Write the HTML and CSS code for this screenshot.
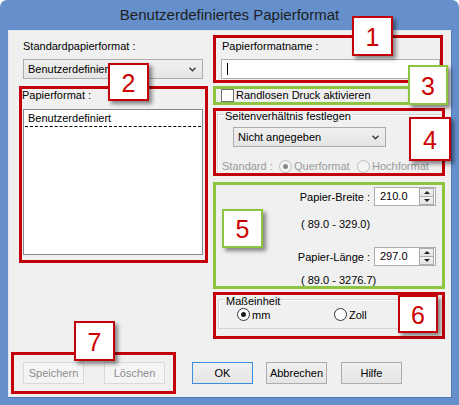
FILE: index.html
```html
<!DOCTYPE html>
<html lang="de">
<head>
<meta charset="utf-8">
<title>Benutzerdefiniertes Papierformat</title>
<link rel="stylesheet" href="styles.css">
</head>
<body>
<div class="window">
  <div class="titlebar">Benutzerdefiniertes Papierformat</div>
  <div class="client">
    <div class="top">
      <div class="col-left">
        <div class="lbl">Standardpapierformat :</div>
        <div class="combo combo-std">
          <span class="combo-text">Benutzerdefiniert</span>
          <svg class="chev" width="7" height="5" viewBox="0 0 7 5"><polyline points="0.5,0.8 3.5,3.8 6.5,0.8" fill="none" stroke="#3a3a3a" stroke-width="1.4"/></svg>
        </div>
        <div class="lbl lbl-pf">Papierformat :</div>
        <div class="listbox">
          <div class="list-item">Benutzerdefiniert</div>
        </div>
      </div>
      <div class="col-right">
        <div class="lbl lbl-name">Papierformatname :</div>
        <div class="textbox"><span class="caret"></span></div>
        <div class="check-row"><span class="checkbox"></span><span class="check-text">Randlosen Druck aktivieren</span></div>
        <div class="group group-ratio">
          <div class="group-title">Seitenverhältnis festlegen</div>
          <div class="combo combo-ratio">
            <span class="combo-text">Nicht angegeben</span>
            <svg class="chev" width="7" height="5" viewBox="0 0 7 5"><polyline points="0.5,0.8 3.5,3.8 6.5,0.8" fill="none" stroke="#3a3a3a" stroke-width="1.4"/></svg>
          </div>
          <div class="ratio-row">
            <span class="std-lbl">Standard :</span>
            <span class="opt opt-quer"><span class="radio radio-dis checked"></span><span>Querformat</span></span>
            <span class="opt"><span class="radio radio-dis"></span><span>Hochformat</span></span>
          </div>
        </div>
        <div class="sizes">
          <div class="size-row">
            <span class="size-lbl">Papier-Breite :</span>
            <div class="spin"><span class="spin-val">210.0</span><span class="spin-btns"><span class="spin-btn spin-up"></span><span class="spin-btn spin-down"></span></span></div>
          </div>
          <div class="range range-1">( 89.0 - 329.0)</div>
          <div class="size-row size-row-2">
            <span class="size-lbl">Papier-Länge :</span>
            <div class="spin"><span class="spin-val">297.0</span><span class="spin-btns"><span class="spin-btn spin-up"></span><span class="spin-btn spin-down"></span></span></div>
          </div>
          <div class="range range-2">( 89.0 - 3276.7)</div>
        </div>
        <div class="group group-unit">
          <div class="group-title">Maßeinheit</div>
          <div class="unit-row">
            <span class="opt opt-mm"><span class="radio checked"></span><span>mm</span></span>
            <span class="opt"><span class="radio"></span><span>Zoll</span></span>
          </div>
        </div>
      </div>
    </div>
    <div class="buttons">
      <button class="btn" disabled>Speichern</button>
      <button class="btn btn-del" disabled>Löschen</button>
      <button class="btn btn-ok">OK</button>
      <button class="btn btn-cancel">Abbrechen</button>
      <button class="btn btn-help">Hilfe</button>
    </div>
  </div>
  <div class="annot">
    <div class="frame red f1"></div>
    <div class="frame red f2"></div>
    <div class="frame green f3"></div>
    <div class="frame red f4"></div>
    <div class="frame green f5"></div>
    <div class="frame red f6"></div>
    <div class="frame red f7"></div>
    <div class="badge red b1">1</div>
    <div class="badge red b2">2</div>
    <div class="badge green b3">3</div>
    <div class="badge red b4">4</div>
    <div class="badge green b5">5</div>
    <div class="badge red b6">6</div>
    <div class="badge red b7">7</div>
  </div>
</div>
</body>
</html>
```
FILE: styles.css
```css
html, body {
  margin: 0;
  padding: 0;
  background: #ffffff;
}
body {
  font-family: "Liberation Sans", Arial, sans-serif;
  font-size: 11px;
  color: #000;
}
.window {
  position: relative;
  width: 459px;
  height: 405px;
  box-sizing: border-box;
  background: #6590cc;
  border-radius: 7px 7px 0 0;
  padding: 0 8px 8px;
  display: flex;
  flex-direction: column;
}
.titlebar {
  height: 30px;
  line-height: 30px;
  text-align: center;
  font-size: 15px;
  color: #1e1e1e;
}
.client {
  flex: 1;
  background: #f0f0f0;
  display: flex;
  flex-direction: column;
  padding: 9px 0 13px;
  box-shadow: inset 1px 1px 0 #dfe6f1, 1px 1px 0 #4f78b6;
}
.top {
  display: flex;
}
.col-left {
  width: 180px;
  margin-left: 15px;
}
.col-right {
  width: 227px;
  margin-left: 14px;
}
.lbl {
  line-height: 15px;
  height: 15px;
  white-space: nowrap;
}
.lbl-pf {
  margin-top: 9px;
  margin-left: -1px;
}
.lbl-name {
  margin-left: 5px;
}

/* combobox */
.combo {
  box-sizing: border-box;
  height: 20px;
  border: 1px solid #acacac;
  background: linear-gradient(#f0f0f0, #e5e5e5);
  display: flex;
  align-items: center;
  padding: 0 6px 0 4px;
}
.combo-text {
  flex: 1;
  white-space: nowrap;
}
.chev {
  display: block;
}
.combo-std {
  margin-top: 5px;
  width: 180px;
}
.combo-ratio {
  margin-top: 3px;
  margin-left: 15px;
  width: 153px;
}

/* listbox */
.listbox {
  margin-top: 6px;
  box-sizing: border-box;
  height: 146px;
  border: 1px solid #828790;
  background: #fff;
  padding-top: 1px;
}
.list-item {
  margin: 0 1px;
  padding-left: 3px;
  height: 15px;
  line-height: 15px;
  border-bottom: 1px dashed #000;
}

/* text box */
.textbox {
  margin-top: 5px;
  margin-left: 4px;
  width: 219px;
  height: 20px;
  box-sizing: border-box;
  border: 1px solid #abadb3;
  background: #fff;
  padding: 3px 0 0 5px;
}
.caret {
  display: block;
  width: 1px;
  height: 12px;
  background: #000;
}

/* checkbox */
.check-row {
  margin-top: 9px;
  margin-left: 4px;
  height: 15px;
  display: flex;
  align-items: center;
}
.checkbox {
  width: 13px;
  height: 13px;
  box-sizing: border-box;
  border: 1px solid #707070;
  background: #fff;
}
.check-text {
  margin-left: 2px;
  line-height: 15px;
}

/* group boxes */
.group {
  box-sizing: border-box;
  border: 1px solid #d5d5d5;
  box-shadow: inset 1px 1px 0 #fbfbfb;
}
.group-title {
  display: table;
  margin: -6px 0 0 6px;
  padding: 0 1px;
  line-height: 15px;
  background: #f0f0f0;
  white-space: nowrap;
}
.group-ratio {
  margin-top: 11px;
  width: 226px;
}
.ratio-row {
  margin-top: 11px;
  margin-left: 4px;
  height: 16px;
  display: flex;
  align-items: center;
  color: #9a9a9a;
}
.std-lbl {
  width: 57px;
}
.opt {
  display: flex;
  align-items: center;
  white-space: nowrap;
}
.opt-quer {
  width: 78px;
}
.radio {
  width: 13px;
  height: 13px;
  box-sizing: border-box;
  border: 1px solid #333;
  border-radius: 50%;
  background: #fff;
  margin-right: 2px;
  display: flex;
  align-items: center;
  justify-content: center;
}
.radio.checked::after {
  content: "";
  width: 5px;
  height: 5px;
  border-radius: 50%;
  background: #1a1a1a;
}
.radio-dis {
  border-color: #bcbcbc;
  background: #f4f4f4;
}
.radio-dis.checked::after {
  background: #8a8a8a;
}

/* size fields */
.sizes {
  margin-top: 12px;
}
.size-row {
  height: 19px;
  display: flex;
  justify-content: flex-end;
  align-items: center;
  padding-right: 8px;
}
.size-lbl {
  margin-right: 4px;
  white-space: nowrap;
}
.spin {
  box-sizing: border-box;
  width: 62px;
  height: 19px;
  border: 1px solid #abadb3;
  background: #fff;
  display: flex;
}
.spin-val {
  flex: 1;
  padding-left: 5px;
  line-height: 17px;
}
.spin-btns {
  width: 15px;
  display: flex;
  flex-direction: column;
  padding: 0 1px 0 0;
}
.spin-btn {
  flex: 1;
  box-sizing: border-box;
  border: 1px solid #acacac;
  background: linear-gradient(#f2f2f2, #e3e3e3);
  display: flex;
  align-items: center;
  justify-content: center;
}
.spin-down {
  margin-top: -1px;
}
.spin-up::after,
.spin-down::after {
  content: "";
  width: 0;
  height: 0;
  border-left: 3px solid transparent;
  border-right: 3px solid transparent;
}
.spin-up::after {
  border-bottom: 3px solid #222;
}
.spin-down::after {
  border-top: 3px solid #222;
}
.range {
  margin-left: 84px;
  line-height: 15px;
  white-space: nowrap;
}
.range-1 {
  margin-top: 11px;
}
.size-row-2 {
  margin-top: 15px;
}
.range-2 {
  margin-top: 7px;
}
.group-unit {
  margin-top: 11px;
  margin-left: 1px;
  width: 219px;
  padding-bottom: 6px;
}
.unit-row {
  margin-top: -2px;
  margin-left: 18px;
  height: 15px;
  display: flex;
  align-items: center;
}
.opt-mm {
  width: 97px;
}

/* buttons */
.buttons {
  margin-top: auto;
  padding-left: 15px;
  height: 22px;
  display: flex;
}
.btn {
  box-sizing: border-box;
  width: 61px;
  height: 22px;
  padding: 0;
  border: 1px solid #acacac;
  background: linear-gradient(#f0f0f0, #e5e5e5);
  font-family: "Liberation Sans", Arial, sans-serif;
  font-size: 11px;
  color: #000;
  border-radius: 0;
}
.btn:disabled {
  border-color: #d9d9d9;
  background: #f4f4f4;
  color: #8e8e8e;
}
.btn-del {
  margin-left: 20px;
}
.btn-ok {
  margin-left: 27px;
  border-color: #3c8fdc;
}
.btn-cancel {
  margin-left: 13px;
}
.btn-help {
  margin-left: 14px;
}

/* annotation overlay */
.annot {
  position: absolute;
  left: 0;
  top: 0;
  width: 459px;
  height: 405px;
  pointer-events: none;
}
.frame {
  position: absolute;
  box-sizing: border-box;
  border: 3px solid;
}
.frame.red { border-color: #c4000b; }
.frame.green { border-color: #8cc63f; }
.f1 { left: 213px; top: 35px; width: 230px; height: 48px; }
.f2 { left: 19px; top: 86px; width: 189px; height: 177px; }
.f3 { left: 213px; top: 86px; width: 200px; height: 19px; }
.f4 { left: 213px; top: 108px; width: 232px; height: 68px; }
.f5 { left: 213px; top: 182px; width: 232px; height: 107px; }
.f6 { left: 213px; top: 292px; width: 232px; height: 47px; }
.f7 { left: 11px; top: 352px; width: 165px; height: 42px; }
.badge {
  position: absolute;
  box-sizing: border-box;
  border: 2px solid;
  background: #fff;
  color: #cc0000;
  font-family: "Liberation Sans", Arial, sans-serif;
  font-size: 25px;
  display: flex;
  align-items: center;
  justify-content: center;
  padding-top: 2px;
  box-shadow: 3px 3px 4px rgba(0, 0, 0, 0.45);
}
.badge.red { border-color: #c4000b; }
.badge.green { border-color: #8cc63f; }
.b1 { left: 352px; top: 16px; width: 41px; height: 40px; }
.b2 { left: 108px; top: 63px; width: 41px; height: 38px; }
.b3 { left: 408px; top: 65px; width: 40px; height: 40px; }
.b4 { left: 409px; top: 117px; width: 42px; height: 44px; }
.b5 { left: 222px; top: 209px; width: 41px; height: 39px; }
.b6 { left: 398px; top: 295px; width: 40px; height: 38px; }
.b7 { left: 74px; top: 321px; width: 41px; height: 40px; }
```
